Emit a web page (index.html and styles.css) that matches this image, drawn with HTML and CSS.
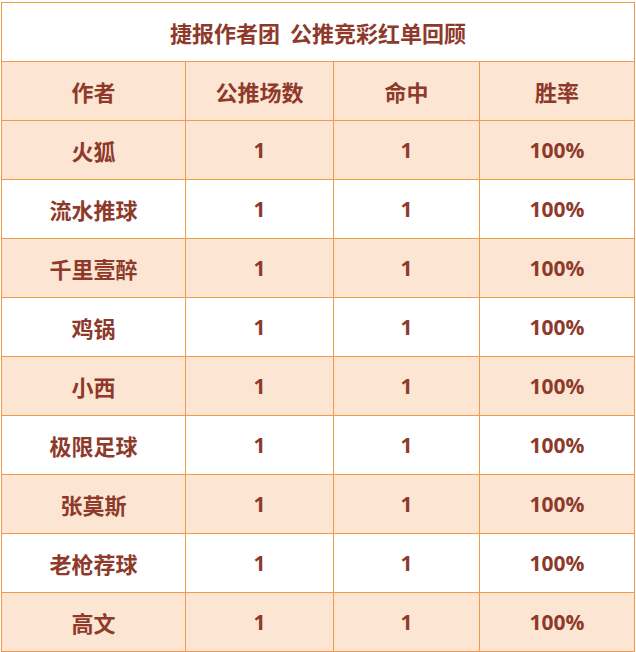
FILE: index.html
```html
<!DOCTYPE html>
<html lang="zh-CN">
<head>
<meta charset="utf-8">
<link rel="stylesheet" href="styles.css">
</head>
<body>
<div class="wrap">
<table class="board">
  <colgroup>
    <col class="c1"><col class="c2"><col class="c3"><col class="c4">
  </colgroup>
  <tr class="title"><td colspan="4">捷报作者团&nbsp;&nbsp;公推竞彩红单回顾</td></tr>
  <tr class="alt"><td>作者</td><td>公推场数</td><td>命中</td><td>胜率</td></tr>
  <tr class="alt"><td>火狐</td><td class="num">1</td><td class="num">1</td><td class="num">100%</td></tr>
  <tr><td>流水推球</td><td class="num">1</td><td class="num">1</td><td class="num">100%</td></tr>
  <tr class="alt"><td>千里壹醉</td><td class="num">1</td><td class="num">1</td><td class="num">100%</td></tr>
  <tr><td>鸡锅</td><td class="num">1</td><td class="num">1</td><td class="num">100%</td></tr>
  <tr class="alt"><td>小西</td><td class="num">1</td><td class="num">1</td><td class="num">100%</td></tr>
  <tr><td>极限足球</td><td class="num">1</td><td class="num">1</td><td class="num">100%</td></tr>
  <tr class="alt"><td>张莫斯</td><td class="num">1</td><td class="num">1</td><td class="num">100%</td></tr>
  <tr><td>老枪荐球</td><td class="num">1</td><td class="num">1</td><td class="num">100%</td></tr>
  <tr class="alt"><td>高文</td><td class="num">1</td><td class="num">1</td><td class="num">100%</td></tr>
</table>
</div>
</body>
</html>
```
FILE: styles.css
```css
html, body {
  margin: 0;
  padding: 0;
  background: #ffffff;
}
.wrap {
  padding: 2px 0 0 1px;
}
.board {
  border-collapse: collapse;
  table-layout: fixed;
  width: 633px;
  font-family: "Noto Sans CJK SC", "Liberation Sans", sans-serif;
  font-weight: bold;
  font-size: 22px;
  color: #8e3a2b;
}
.c1 { width: 184px; }
.c2 { width: 148px; }
.c3 { width: 146px; }
.c4 { width: 155px; }
.board td {
  border: 1px solid #f29a48;
  height: 59px;
  box-sizing: border-box;
  padding: 0;
  text-align: center;
  vertical-align: middle;
  line-height: 24px;
}
.board td.num {
  font-family: "Open Sans", "Noto Sans CJK SC", sans-serif;
  font-size: 21px;
}
.board tr.alt td {
  background: #fde5d3;
}
.title td {
  background: #ffffff;
}
```
